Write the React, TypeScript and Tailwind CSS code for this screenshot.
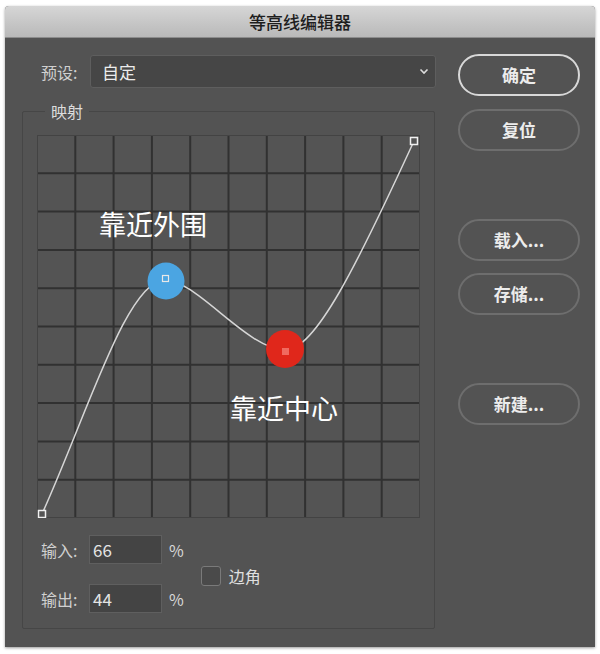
const FONT = { fontFamily: '"Noto Sans CJK SC", "Noto Sans", sans-serif' };

function CurveGrid() {
  const size = 383;
  const step = size / 10;
  const lines = Array.from({ length: 9 }, (_, i) => (i + 1) * step);

  return (
    <div className="relative h-[383px] w-[383px]">
      <svg width={size} height={size} className="absolute inset-0">
        <rect x="0.5" y="0.5" width={size - 1} height={size - 1} fill="#545454" stroke="#434343" />
        {lines.map((p) => (
          <g key={p}>
            <line x1={p} y1="1" x2={p} y2={size - 1} stroke="#313131" strokeWidth="2" />
            <line x1="1" y1={p} x2={size - 1} y2={p} stroke="#313131" strokeWidth="2" />
          </g>
        ))}
        <path
          d="M5 379 C 50 280, 90 145, 128 145 C 160 145, 210 215, 249 215 C 278 215, 320 130, 377 6"
          fill="none"
          stroke="#d6d6d6"
          strokeWidth="1.5"
        />
        {/* blue point */}
        <circle cx="129" cy="146" r="18.5" fill="#4ba5e2" />
        <rect x="125.5" y="140.5" width="6" height="6" fill="none" stroke="#e8e8e8" strokeWidth="1.2" />
        {/* red point */}
        <circle cx="248" cy="214" r="19" fill="#e0271b" />
        <rect x="245" y="213" width="7" height="7" fill="#f06a60" />
        {/* endpoints */}
        <rect x="1.5" y="375.5" width="7" height="7" fill="#545454" stroke="#f0f0f0" strokeWidth="1.5" />
        <rect x="373.5" y="2.5" width="7" height="7" fill="#545454" stroke="#f0f0f0" strokeWidth="1.5" />
      </svg>
      <div className="absolute left-[62px] top-[75px] text-[27px] leading-none text-white">靠近外围</div>
      <div className="absolute left-[193px] top-[259px] text-[27px] leading-none text-white">靠近中心</div>
    </div>
  );
}

function DlgButton({ label, primary }: { label: string; primary?: boolean }) {
  return (
    <button
      className={
        "flex h-[42px] w-[122px] items-center justify-center rounded-full text-[17px] font-bold text-[#ececec] " +
        (primary ? "border-2 border-[#d8d8d8]" : "border-2 border-[#6e6e6e]")
      }
    >
      {label}
    </button>
  );
}

function ValueRow({ label, value }: { label: string; value: string }) {
  return (
    <div className="flex items-center">
      <span className="w-[48px] text-[16px] text-[#d0d0d0]">{label}</span>
      <div className="flex h-[29px] w-[73px] items-center border border-[#5f5f5f] bg-[#444444] pl-[3px] text-[17px] text-[#e4e4e4]">
        {value}
      </div>
      <span className="ml-[7px] text-[16px] text-[#d8d8d8]">%</span>
    </div>
  );
}

export default function App() {
  return (
    <div className="h-[654px] w-[600px] bg-white px-[5px] pt-[6px]" style={FONT}>
      <div className="h-[641px] w-[590px] overflow-hidden rounded-t-[4px] bg-[#535353] shadow-[0_1px_3px_rgba(0,0,0,0.4)]">
        <div className="flex h-[32px] items-center justify-center border-b border-[#8c8c8c] bg-gradient-to-b from-[#d6d6d6] to-[#b9b9b9] text-[17px] font-medium text-[#1e1e1e]">
          等高线编辑器
        </div>

        <div className="flex pl-[17px]">
          {/* left column */}
          <div className="flex w-[414px] flex-col">
            <div className="mt-[17px] flex items-center">
              <span className="ml-[19px] w-[49px] text-[16px] text-[#d0d0d0]">预设:</span>
              <div className="flex h-[33px] w-[346px] items-center justify-between rounded-[3px] border border-[#5e5e5e] bg-[#464646] pl-[11px] pr-[6px] text-[17px] text-[#ececec]">
                <span>自定</span>
                <svg width="10" height="7" viewBox="0 0 10 7">
                  <path d="M1.5 1.5 L5 5 L8.5 1.5" fill="none" stroke="#dcdcdc" strokeWidth="1.6" />
                </svg>
              </div>
            </div>

            <div className="relative mt-[23px] h-[518px] w-[413px] rounded-[2px] border border-[#464646]">
              <div className="absolute -top-[13px] left-[22px] bg-[#535353] px-[6px] text-[16px] text-[#dcdcdc]">映射</div>
              <div className="ml-[14px] mt-[23px]">
                <CurveGrid />
              </div>
              <div className="mt-[17px] flex items-center">
                <div className="ml-[18px] flex flex-col gap-[20px]">
                  <ValueRow label="输入:" value="66" />
                  <ValueRow label="输出:" value="44" />
                </div>
                <div className="ml-[17px] mt-[3px] flex items-center">
                  <div className="h-[20px] w-[20px] rounded-[3px] border border-[#7a7a7a] bg-[#4a4a4a]" />
                  <span className="ml-[8px] text-[16px] text-[#e0e0e0]">边角</span>
                </div>
              </div>
            </div>
          </div>

          {/* right column */}
          <div className="ml-[22px] flex flex-col">
            <div className="mt-[16px]">
              <DlgButton label="确定" primary />
            </div>
            <div className="mt-[13px]">
              <DlgButton label="复位" />
            </div>
            <div className="mt-[68px]">
              <DlgButton label="载入..." />
            </div>
            <div className="mt-[12px]">
              <DlgButton label="存储..." />
            </div>
            <div className="mt-[68px]">
              <DlgButton label="新建..." />
            </div>
          </div>
        </div>
      </div>
    </div>
  );
}
